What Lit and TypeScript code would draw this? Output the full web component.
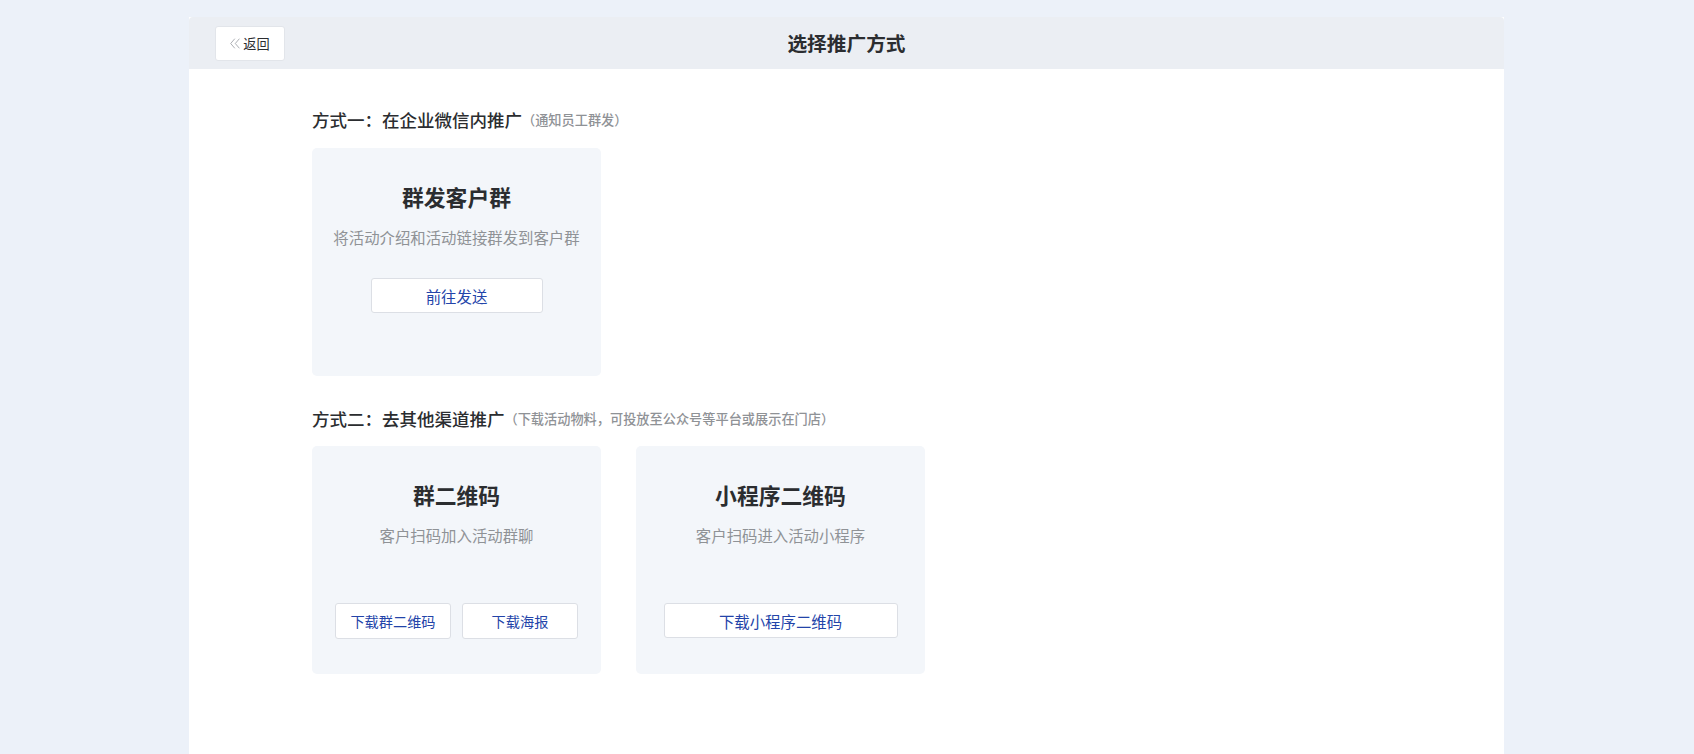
import { LitElement, html, css } from "lit";
import { customElement } from "lit/decorators.js";

@customElement("app-root")
export class AppRoot extends LitElement {
  static styles = css`
    :host { display: block; height: 754px; overflow: hidden; background: #ecf1f9; font-family: "Noto Sans CJK SC", "Noto Sans", sans-serif; padding: 17px 190px 0 189px; box-sizing: border-box; color: #2b2d30; }
    .panel { background: #fff; height: 737px; }
    .head { height: 52px; background: #ebeef3; display: grid; grid-template-columns: 1fr auto 1fr; align-items: center; border-radius: 4px 4px 0 0; }
    .back { justify-self: start; margin-left: 26px; width: 70px; height: 35px; box-sizing: border-box; background: #fff; border: 1px solid #e2e5ea; border-radius: 3px; display: flex; align-items: center; justify-content: center; gap: 3px; font-size: 13.2px; color: #2b2d30; }
    .back svg { width: 10px; height: 11px; display: block; }
    .title { font-size: 19.7px; font-weight: 700; line-height: 1; }
    .body { padding: 39px 123px; }
    .sec-title { margin: 0; height: 24px; line-height: 24px; font-size: 17.5px; font-weight: 500; display: flex; align-items: center; }
    .sec-title small { font-size: 13.2px; color: #8f9296; font-weight: 500; }
    .row { display: flex; gap: 35px; margin: 16px 0 31px; }
    .row.second { margin-top: 15px; }
    .card { width: 289px; height: 228px; box-sizing: border-box; background: #f3f6fa; border-radius: 5px; display: flex; flex-direction: column; align-items: center; padding: 34px 0 0; }
    .card h3 { margin: 0; font-size: 21.8px; line-height: 30px; font-weight: 700; }
    .card p { margin: 13px 0 0; font-size: 15.4px; line-height: 24px; color: #8f9296; }
    .btns { display: flex; gap: 11px; justify-content: center; }
    .one .btns { margin-top: 29px; }
    .two .btns { margin-top: 56px; }
    .btn { height: 35px; box-sizing: border-box; background: #fff; border: 1px solid #dcdfe5; border-radius: 3px; display: flex; align-items: center; justify-content: center; color: #2344a9; font-size: 15.4px; }
    .w172 { width: 172px; }
    .w116 { width: 116px; height: 36px; font-size: 14.2px; }
    .w234 { width: 234px; }
  `;

  render() {
    return html`
      <div class="panel">
        <header class="head">
          <div class="back">
            <svg viewBox="0 0 10 11" fill="none" stroke="#a3a6ab" stroke-width="0.9"><path d="M4.8 .7 .7 5.5 4.8 10.3M9.4 .7 5.3 5.5 9.4 10.3"/></svg>
            <span>返回</span>
          </div>
          <div class="title">选择推广方式</div>
          <div></div>
        </header>
        <div class="body">
          <h2 class="sec-title">方式一：在企业微信内推广<small>（通知员工群发）</small></h2>
          <div class="row">
            <div class="card one">
              <h3>群发客户群</h3>
              <p>将活动介绍和活动链接群发到客户群</p>
              <div class="btns"><div class="btn w172">前往发送</div></div>
            </div>
          </div>
          <h2 class="sec-title">方式二：去其他渠道推广<small>（下载活动物料，可投放至公众号等平台或展示在门店）</small></h2>
          <div class="row second">
            <div class="card two">
              <h3>群二维码</h3>
              <p>客户扫码加入活动群聊</p>
              <div class="btns"><div class="btn w116">下载群二维码</div><div class="btn w116">下载海报</div></div>
            </div>
            <div class="card two">
              <h3>小程序二维码</h3>
              <p>客户扫码进入活动小程序</p>
              <div class="btns"><div class="btn w234">下载小程序二维码</div></div>
            </div>
          </div>
        </div>
      </div>
    `;
  }
}
